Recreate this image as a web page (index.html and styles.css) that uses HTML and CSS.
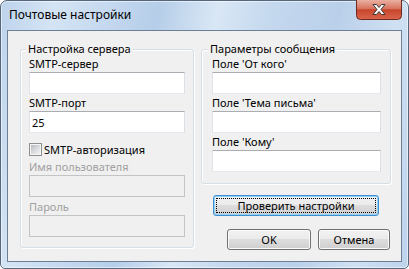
FILE: index.html
```html
<!DOCTYPE html>
<html lang="ru">
<head>
    <meta charset="UTF-8">
    <title>Почтовые настройки</title>
    <link rel="stylesheet" href="styles.css">
</head>
<body>
    <div class="window">
        <div class="titlebar">
            <span class="title">Почтовые настройки</span>
            <button type="button" class="close" title="Закрыть">
                <svg width="46" height="20" viewBox="0 0 46 20">
                    <defs>
                        <linearGradient id="close-bg" x1="0" y1="0" x2="0" y2="1">
                            <stop offset="0" stop-color="#eab0a2"/>
                            <stop offset="0.45" stop-color="#d8725d"/>
                            <stop offset="0.5" stop-color="#c8452c"/>
                            <stop offset="1" stop-color="#d9654c"/>
                        </linearGradient>
                    </defs>
                    <path d="M0.5 0 V15.5 Q0.5 19.5 4.5 19.5 H41.5 Q45.5 19.5 45.5 15.5 V0" fill="url(#close-bg)" stroke="#6e2b21"/>
                    <path d="M17 4.5 H20.5 L23 7.5 L25.5 4.5 H29 L25 9.5 L29 14.5 H25.5 L23 11.5 L20.5 14.5 H17 L21 9.5 Z" fill="#fff" stroke="#3a3a3a" stroke-width="1" stroke-linejoin="round"/>
                </svg>
            </button>
        </div>

        <div class="client">
            <!-- Server settings -->
            <fieldset class="group group-server">
                <legend>Настройка сервера</legend>
                <label class="field-label first" for="smtp-server">SMTP-сервер</label>
                <input type="text" class="text" id="smtp-server">
                <label class="field-label" for="smtp-port">SMTP-порт</label>
                <input type="text" class="text" id="smtp-port" value="25">
                <label class="check-row">
                    <input type="checkbox" class="check" id="smtp-auth">
                    <span>SMTP-авторизация</span>
                </label>
                <label class="field-label disabled gap" for="smtp-user">Имя пользователя</label>
                <input type="text" class="text" id="smtp-user" disabled>
                <label class="field-label disabled gap" for="smtp-pass">Пароль</label>
                <input type="password" class="text" id="smtp-pass" disabled>
            </fieldset>

            <div class="side">
                <!-- Message settings -->
                <fieldset class="group group-message">
                    <legend>Параметры сообщения</legend>
                    <label class="field-label first" for="mail-from">Поле 'От кого'</label>
                    <input type="text" class="text" id="mail-from">
                    <label class="field-label" for="mail-subject">Поле 'Тема письма'</label>
                    <input type="text" class="text" id="mail-subject">
                    <label class="field-label" for="mail-to">Поле 'Кому'</label>
                    <input type="text" class="text" id="mail-to">
                </fieldset>

                <button type="button" class="btn btn-default btn-check">Проверить настройки</button>

                <div class="actions">
                    <button type="submit" class="btn btn-ok">OK</button>
                    <button type="button" class="btn btn-cancel">Отмена</button>
                </div>
            </div>
        </div>
    </div>
</body>
</html>
```

FILE: styles.css
```css
body { margin: 0; font-family: "Noto Sans", "DejaVu Sans", sans-serif; font-size: 11px; color: #000; background: #fff; }

/* window frame */
.window { width: 409px; height: 269px; box-sizing: border-box; display: flex; flex-direction: column; padding: 0 6px 6px; border: 1px solid #56677c; border-radius: 7px 7px 5px 5px; box-shadow: inset 0 0 0 1px rgba(255, 255, 255, 0.55); background: linear-gradient(100deg, #bdd3ec 0%, #d4e4f4 12%, #c7daf0 22%, #b6cee9 35%, #d9e7f5 48%, #c4d8ee 60%, #bad0ea 75%, #cfe0f2 88%, #bdd3ec 100%); }
.titlebar { height: 29px; display: flex; justify-content: space-between; align-items: flex-start; }
.title { margin: 6px 0 0 2px; font-size: 12px; line-height: 16px; }
.close { margin: -1px 0 0 0; padding: 0; border: none; background: none; width: 46px; height: 20px; }
.close svg { display: block; }

/* client area */
.client { flex: 1; display: grid; grid-template-columns: 174px 190px; column-gap: 7px; align-items: start; padding: 11px 0 0 12px; border: 1px solid #6d7f95; background: #f0f0f0; }
.side { display: flex; flex-direction: column; }

.group { margin: 0; min-width: 0; border: 1px solid #d5dfe5; border-radius: 3px; box-shadow: inset 1px 1px 0 #fff, 1px 1px 0 #fff; }
.group legend { padding: 0 2px; margin-left: -3px; line-height: 14px; background: #f0f0f0; }
.group-server { padding: 0 8px 10px; }
.group-message { padding: 0 9px 11px 10px; }
.group-message legend { margin-left: -4px; }

.field-label { display: block; line-height: 16px; margin-top: 1px; }
.field-label.first { margin-top: 0; }
.field-label.gap { margin-top: 2px; }
.field-label.disabled { color: #a0a0a0; }

.text { display: block; box-sizing: border-box; width: 100%; height: 22px; margin: 0; padding: 0 2px; border: 1px solid; border-color: #abadb3 #dbdfe6 #e3e9ef #e2e3ea; background: #fff; font: inherit; color: #000; outline: none; }
.text:disabled { background: #f0f0f0; border-color: #c2c4c6; }

.check-row { display: flex; align-items: center; gap: 2px; height: 15px; margin-top: 9px; }
.check { appearance: none; -webkit-appearance: none; width: 13px; height: 13px; box-sizing: border-box; margin: 0; padding: 1px; border: 1px solid #8e8f8f; background: linear-gradient(135deg, #b7bcc2, #e4e5e7 70%, #f0f0f0) content-box, #f6f6f6; }

/* buttons */
.btn { height: 21px; box-sizing: border-box; padding: 0; font: inherit; color: #000; border: 1px solid #707070; border-radius: 3px; background: linear-gradient(#f2f2f2, #ebebeb 45%, #dddddd 50%, #cfcfcf); box-shadow: inset 0 0 0 1px #fbfbfb; }
.btn-default { border-color: #3c8fd0; box-shadow: inset 0 0 0 1px #8fd2f5; outline: 1px dotted #000; outline-offset: -4px; }
.btn-check { width: 166px; margin: 11px 0 0 12px; }
.actions { display: flex; gap: 7px; margin: 13px 0 0 26px; }
.btn-ok { width: 84px; }
.btn-cancel { width: 72px; }
```
